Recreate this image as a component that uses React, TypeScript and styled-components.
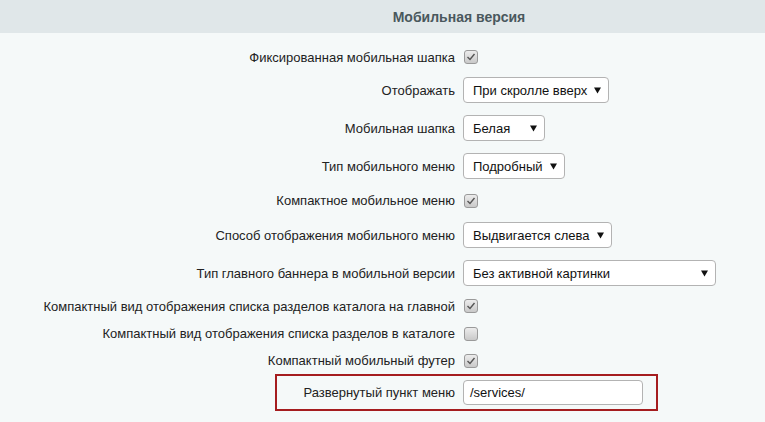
import React from "react";
import styled, { createGlobalStyle } from "styled-components";

const Global = createGlobalStyle`
  html, body { margin: 0; padding: 0; background: #f5f9f9; }
  body { font-family: "Liberation Sans", Arial, sans-serif; }
`;

const Page = styled.div`
  width: 765px;
  height: 422px;
  background: #f5f9f9;
  overflow: hidden;
`;

const Header = styled.div`
  height: 33px;
  background: #e0e7e9;
  display: flex;
  align-items: center;
  justify-content: center;
  padding-left: 153px;
  box-sizing: border-box;
  font-weight: bold;
  font-size: 14px;
  color: #4a585d;
`;

const Body = styled.div`
  padding-top: 10px;
  display: flex;
  flex-direction: column;
`;

const Row = styled.div<{ $h: number }>`
  height: ${(p) => p.$h}px;
  display: flex;
  align-items: center;
`;

const Label = styled.div`
  width: 455px;
  text-align: right;
  font-size: 13px;
  color: #222;
  white-space: nowrap;
`;

const Control = styled.div`
  margin-left: 8px;
  display: flex;
  align-items: center;
`;

const Box = styled.div`
  width: 14px;
  height: 14px;
  margin-left: 1px;
  box-sizing: border-box;
  border: 1px solid #9a9a9a;
  border-radius: 3px;
  background: linear-gradient(#ececec, #c9c9c9);
  display: flex;
  align-items: center;
  justify-content: center;
`;

const Select = styled.div<{ $w: number }>`
  width: ${(p) => p.$w}px;
  height: 26px;
  box-sizing: border-box;
  border: 1px solid #b3b3b3;
  border-radius: 4px;
  background: #fff;
  display: flex;
  align-items: center;
  justify-content: space-between;
  padding: 0 7px 0 9px;
  font-size: 13px;
  color: #111;
`;

const Highlight = styled.div`
  margin-left: 275px;
  width: 383px;
  height: 37px;
  box-sizing: border-box;
  border: 2px solid #a51d1f;
  display: flex;
  align-items: center;
`;

const HLabel = styled(Label)`
  width: 178px;
`;

const Input = styled.div`
  width: 180px;
  height: 25px;
  box-sizing: border-box;
  border: 1px solid #b3b3b3;
  border-radius: 4px;
  background: #fff;
  display: flex;
  align-items: center;
  padding: 0 6px;
  font-size: 13px;
  color: #111;
`;

const Arrow = () => (
  <svg width="7" height="7" viewBox="0 0 7 7">
    <polygon points="0,0.5 7,0.5 3.5,6.5" fill="#111" />
  </svg>
);

const Check = ({ on }: { on: boolean }) => (
  <Box>
    {on && (
      <svg width="10" height="10" viewBox="0 0 10 10">
        <polyline points="1.5,5 4,7.5 8.5,2" fill="none" stroke="#555" strokeWidth="1.4" />
      </svg>
    )}
  </Box>
);

type Item =
  | { kind: "check"; label: string; on: boolean; h: number }
  | { kind: "select"; label: string; value: string; w: number; h: number };

const items: Item[] = [
  { kind: "check", label: "Фиксированная мобильная шапка", on: true, h: 28 },
  { kind: "select", label: "Отображать", value: "При скролле вверх", w: 146, h: 38 },
  { kind: "select", label: "Мобильная шапка", value: "Белая", w: 82, h: 38 },
  { kind: "select", label: "Тип мобильного меню", value: "Подробный", w: 102, h: 38 },
  { kind: "check", label: "Компактное мобильное меню", on: true, h: 31 },
  { kind: "select", label: "Способ отображения мобильного меню", value: "Выдвигается слева", w: 149, h: 38 },
  { kind: "select", label: "Тип главного баннера в мобильной версии", value: "Без активной картинки", w: 253, h: 38 },
  { kind: "check", label: "Компактный вид отображения списка разделов каталога на главной", on: true, h: 28 },
  { kind: "check", label: "Компактный вид отображения списка разделов в каталоге", on: false, h: 27 },
  { kind: "check", label: "Компактный мобильный футер", on: true, h: 27 },
];

export default function App() {
  return (
    <Page>
      <Global />
      <Header>Мобильная версия</Header>
      <Body>
        {items.map((it) => (
          <Row key={it.label} $h={it.h}>
            <Label>{it.label}</Label>
            <Control>
              {it.kind === "check" ? (
                <Check on={it.on} />
              ) : (
                <Select $w={it.w}>
                  <span>{it.value}</span>
                  <Arrow />
                </Select>
              )}
            </Control>
          </Row>
        ))}
        <Highlight>
          <HLabel>Развернутый пункт меню</HLabel>
          <Control>
            <Input>/services/</Input>
          </Control>
        </Highlight>
      </Body>
    </Page>
  );
}
